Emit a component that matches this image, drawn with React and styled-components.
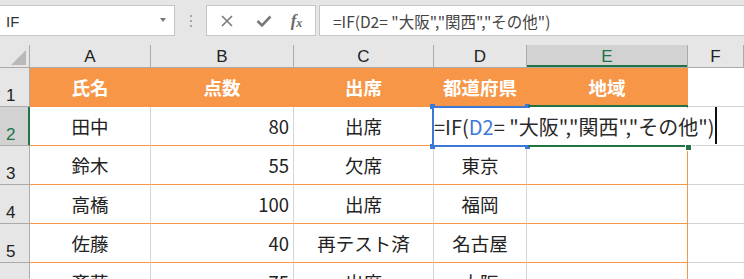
import React from 'react'
import styled, { createGlobalStyle } from 'styled-components'

const GlobalStyle = createGlobalStyle`
    html, body {
        margin: 0;
        padding: 0;
        background: #ffffff;
        overflow: hidden;
    }
    body {
        font-family: "Noto Sans CJK JP", "Noto Sans", sans-serif;
    }
`

const ORANGE = '#f79646'
const GREEN = '#217346'
const BLUE = '#3c78d8'
const GRID = '#d4d4d4'
const HEAD_LINE = '#ababab'

const columns = ['A', 'B', 'C', 'D', 'E', 'F']

// D2 sits under the edit box, so it is left blank here
const rows = [
    ['氏名', '点数', '出席', '都道府県', '地域'],
    ['田中', '80', '出席', '', ''],
    ['鈴木', '55', '欠席', '東京', ''],
    ['高橋', '100', '出席', '福岡', ''],
    ['佐藤', '40', '再テスト済', '名古屋', ''],
    ['斎藤', '75', '出席', '大阪', ''],
]

function App() {
    return (
        <>
            <GlobalStyle />
            <Toolbar>
                <NameBox>
                    <NameText>IF</NameText>
                    <DropArrow />
                </NameBox>
                <Grip>
                    <Dot /><Dot /><Dot />
                </Grip>
                <FxGroup>
                    <IconSlot>
                        <svg width="14" height="14" viewBox="0 0 14 14">
                            <path d="M2 2 L12 12 M12 2 L2 12" stroke="#7a7a7a" strokeWidth="1.6" fill="none" />
                        </svg>
                    </IconSlot>
                    <IconSlot>
                        <svg width="16" height="14" viewBox="0 0 16 14">
                            <path d="M1.5 7 L6 11.5 L14.5 2.5" stroke="#7a7a7a" strokeWidth="2.6" fill="none" />
                        </svg>
                    </IconSlot>
                    <FxText>f<sub>x</sub></FxText>
                </FxGroup>
                <FormulaBox>=IF(D2= "大阪","関西","その他")</FormulaBox>
            </Toolbar>
            <Sheet>
                <Grid>
                    <Corner><CornerMark /></Corner>
                    {columns.map(c => (
                        <ColHead key={c} $active={c === 'E'}>{c}</ColHead>
                    ))}
                    {rows.map((r, i) => (
                        <React.Fragment key={i}>
                            <RowHead $active={i === 1}>{i + 1}</RowHead>
                            {r.map((v, j) => (
                                <Cell
                                    key={j}
                                    $header={i === 0}
                                    $right={i > 0 && j === 1}
                                    $edge={j === 4}
                                >
                                    {v}
                                </Cell>
                            ))}
                            <OutsideCell />
                        </React.Fragment>
                    ))}
                </Grid>
                <RefFrame>
                    <Handle $x="left" $y="top" />
                    <Handle $x="right" $y="top" />
                    <Handle $x="left" $y="bottom" />
                    <Handle $x="right" $y="bottom" />
                </RefFrame>
                <SelectLine $top />
                <SelectLine />
                <FillHandle />
                <EditBox>
                    =IF(<RefText>D2</RefText>= "大阪","関西","その他")
                    <Caret />
                </EditBox>
            </Sheet>
        </>
    )
}

export default App

const Toolbar = styled.div`
    display: flex;
    align-items: flex-start;
    height: 45px;
    padding-top: 5px;
    box-sizing: border-box;
    background: #e6e6e6;
`

const NameBox = styled.div`
    width: 176px;
    height: 31px;
    margin-left: -1px;
    box-sizing: border-box;
    display: flex;
    align-items: center;
    justify-content: space-between;
    padding: 0 8px 0 6px;
    background: #ffffff;
    border: 1px solid #c6c6c6;
`

const NameText = styled.span`
    font-family: "Liberation Sans", Arial, sans-serif;
    font-size: 15px;
    color: #333333;
    padding-top: 2px;
`

const DropArrow = styled.span`
    width: 0;
    height: 0;
    border-left: 3.5px solid transparent;
    border-right: 3.5px solid transparent;
    border-top: 4px solid #777777;
    margin-top: -2px;
`

const Grip = styled.div`
    width: 31px;
    height: 31px;
    display: flex;
    flex-direction: column;
    align-items: center;
    justify-content: center;
    gap: 3px;
`

const Dot = styled.span`
    width: 2px;
    height: 2px;
    background: #a6a6a6;
`

const FxGroup = styled.div`
    width: 110px;
    height: 31px;
    box-sizing: border-box;
    display: grid;
    grid-template-columns: 38px 36px 1fr;
    align-items: center;
    padding-left: 1px;
    background: #ffffff;
    border: 1px solid #c6c6c6;
`

const IconSlot = styled.span`
    display: flex;
    justify-content: center;
    align-items: center;
`

const FxText = styled.span`
    font-family: "Liberation Serif", "Times New Roman", serif;
    font-style: italic;
    font-weight: 700;
    font-size: 17px;
    color: #6a6a6a;
    text-align: center;
    padding-right: 4px;

    sub {
        font-size: 12px;
        vertical-align: -1px;
    }
`

const FormulaBox = styled.div`
    flex: 1;
    height: 31px;
    margin-left: 3px;
    margin-right: -2px;
    box-sizing: border-box;
    display: flex;
    align-items: center;
    padding-left: 13px;
    background: #ffffff;
    border: 1px solid #c6c6c6;
    font-size: 15.5px;
    color: #444444;
    white-space: nowrap;
`

const Sheet = styled.div`
    position: relative;
`

const Grid = styled.div`
    display: grid;
    grid-template-columns: 30px 121px 143px 140px 93px 161px 1fr;
    grid-template-rows: 23px;
    grid-auto-rows: 39px;
`

const Corner = styled.div`
    position: relative;
    background: #e6e6e6;
    border-right: 1px solid ${HEAD_LINE};
    border-bottom: 1px solid ${HEAD_LINE};
    box-sizing: border-box;
`

const CornerMark = styled.span`
    position: absolute;
    right: 3px;
    bottom: 2px;
    width: 0;
    height: 0;
    border-left: 15px solid transparent;
    border-bottom: 15px solid #b9b9b9;
`

const ColHead = styled.div`
    display: flex;
    align-items: center;
    justify-content: center;
    box-sizing: border-box;
    padding-top: 1px;
    background: ${p => (p.$active ? '#d2d2d2' : '#e6e6e6')};
    border-right: 1px solid ${HEAD_LINE};
    border-bottom: 1px solid ${HEAD_LINE};
    box-shadow: ${p => (p.$active ? `inset 0 -2px 0 ${GREEN}` : 'none')};
    font-family: "Liberation Sans", Arial, sans-serif;
    font-size: 17px;
    color: ${p => (p.$active ? GREEN : '#222222')};
`

const RowHead = styled.div`
    display: flex;
    align-items: flex-end;
    box-sizing: border-box;
    padding: 0 0 2px 6px;
    background: ${p => (p.$active ? '#d2d2d2' : '#e6e6e6')};
    border-right: 1px solid ${p => (p.$active ? GREEN : HEAD_LINE)};
    border-bottom: 1px solid ${HEAD_LINE};
    box-shadow: ${p => (p.$active ? `inset -1px 0 0 ${GREEN}` : 'none')};
    font-family: "Liberation Sans", Arial, sans-serif;
    font-size: 17px;
    line-height: 1;
    color: ${p => (p.$active ? GREEN : '#222222')};
`

const Cell = styled.div`
    display: flex;
    align-items: center;
    justify-content: ${p => (p.$right ? 'flex-end' : 'center')};
    box-sizing: border-box;
    padding: 0 ${p => (p.$right ? '4px' : '0')} 0 0;
    background: ${p => (p.$header ? ORANGE : '#ffffff')};
    border-right: 1px solid ${p => (p.$header || p.$edge ? ORANGE : GRID)};
    border-bottom: 1px solid ${ORANGE};
    font-size: 18.5px;
    font-weight: ${p => (p.$header ? 700 : 400)};
    color: ${p => (p.$header ? '#ffffff' : '#222222')};
    white-space: nowrap;
    overflow: hidden;
`

const OutsideCell = styled.div`
    box-sizing: border-box;
    border-bottom: 1px solid ${GRID};
`

const EditBox = styled.div`
    position: absolute;
    left: 434px;
    top: 63px;
    width: 283px;
    height: 37px;
    display: flex;
    align-items: center;
    background: #ffffff;
    font-size: 20px;
    color: #2a2a2a;
    white-space: nowrap;
`

const RefText = styled.span`
    color: ${BLUE};
`

const Caret = styled.span`
    position: absolute;
    left: 281px;
    top: -1px;
    width: 2px;
    height: 37px;
    background: #111111;
`

const RefFrame = styled.div`
    position: absolute;
    left: 432px;
    top: 61px;
    width: 96px;
    height: 41px;
    box-sizing: border-box;
    border: 2px solid ${BLUE};
`

const Handle = styled.span`
    position: absolute;
    width: 5px;
    height: 5px;
    background: ${BLUE};
    ${p => (p.$x === 'left' ? 'left: -4px;' : 'right: -4px;')}
    ${p => (p.$y === 'top' ? 'top: -4px;' : 'bottom: -4px;')}
`

const SelectLine = styled.div`
    position: absolute;
    left: 528px;
    top: ${p => (p.$top ? '60px' : '100px')};
    width: 160px;
    height: 2px;
    background: ${GREEN};
`

const FillHandle = styled.span`
    position: absolute;
    left: 685px;
    top: 99px;
    width: 5px;
    height: 5px;
    background: ${GREEN};
    border: 1px solid #ffffff;
`
